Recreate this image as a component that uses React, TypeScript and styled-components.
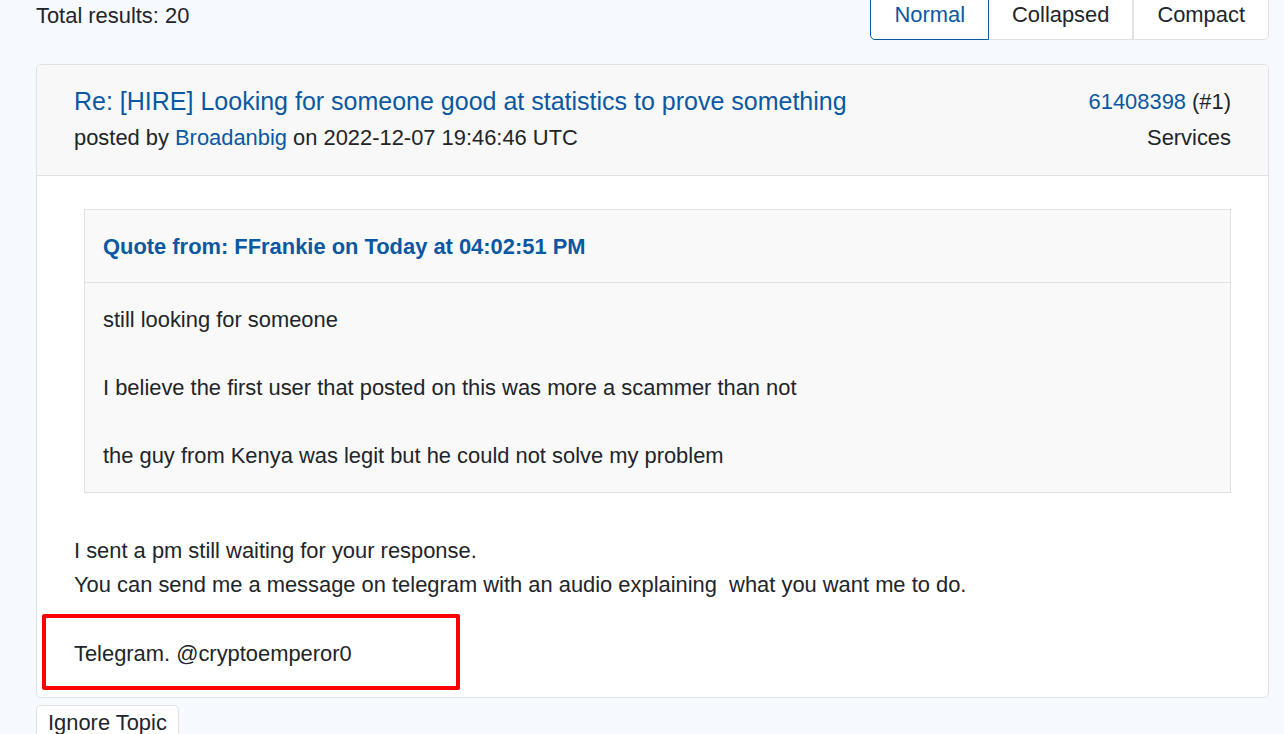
import React from 'react';
import styled, { createGlobalStyle } from 'styled-components';

const GlobalStyle = createGlobalStyle`
  html, body {
    margin: 0;
    padding: 0;
    background: #f6f9fe;
    font-family: "Liberation Sans", Arial, sans-serif;
    font-size: 21.9px;
    line-height: 34px;
    color: #212529;
    overflow: hidden;
  }
  * { box-sizing: border-box; }
`;

const views = ['Normal', 'Collapsed', 'Compact'];

const App = () => {
  return (
    <>
      <GlobalStyle />
      <Page>
        <TopBar>
          <Total>Total results: 20</Total>
          <Tabs>
            {views.map((v, i) => (
              <Tab key={v} $active={i === 0}>{v}</Tab>
            ))}
          </Tabs>
        </TopBar>

        <Card>
          <CardHeader>
            <div>
              <Title href="#">Re: [HIRE] Looking for someone good at statistics to prove something</Title>
              <Meta>posted by <Link href="#">Broadanbig</Link> on 2022-12-07 19:46:46 UTC</Meta>
            </div>
            <Side>
              <div><Link href="#">61408398</Link> (#1)</div>
              <div>Services</div>
            </Side>
          </CardHeader>

          <CardBody>
            <Quote>
              <QuoteHead>Quote from: FFrankie on Today at 04:02:51 PM</QuoteHead>
              <QuoteText>
                still looking for someone<br /><br />
                I believe the first user that posted on this was more a scammer than not<br /><br />
                the guy from Kenya was legit but he could not solve my problem
              </QuoteText>
            </Quote>
            <Text>
              I sent a pm still waiting for your response.<br />
              You can send me a message on telegram with an audio explaining&nbsp; what you want me to do.
            </Text>
            <Highlight>Telegram. @cryptoemperor0</Highlight>
          </CardBody>
        </Card>

        <IgnoreButton>Ignore Topic</IgnoreButton>
      </Page>
    </>
  );
};

const Page = styled.div`
  margin-top: -11px;
  padding: 0 15px 0 36px;
`;

const TopBar = styled.div`
  display: flex;
  justify-content: space-between;
  align-items: center;
  margin-bottom: 24px;
`;

const Total = styled.div`
  padding-top: 2px;
`;

const Tabs = styled.div`
  display: flex;
`;

const Tab = styled.button<{ $active?: boolean }>`
  font: inherit;
  line-height: 34px;
  padding: 8px 23px 7px;
  background: #fff;
  color: ${p => (p.$active ? '#0a58a2' : '#212529')};
  border: 1px solid ${p => (p.$active ? '#0a58a2' : '#dee2e6')};
  margin-left: -1px;
  position: relative;
  z-index: ${p => (p.$active ? 1 : 0)};
  &:first-child { border-radius: 0 0 0 5px; margin-left: 0; }
  &:last-child { border-radius: 0 0 5px 0; border-left: 2px solid #dee2e6; }
`;

const Card = styled.div`
  border: 1px solid #dee2e6;
  border-radius: 5px;
  background: #fff;
  overflow: hidden;
`;

const CardHeader = styled.div`
  display: flex;
  justify-content: space-between;
  background: #f8f8f8;
  border-bottom: 1px solid #dee2e6;
  padding: 19px 37px 19px;
`;

const Title = styled.a`
  display: block;
  font-size: 25px;
  line-height: 35px;
  margin-bottom: 2px;
  color: #0a58a2;
  text-decoration: none;
`;

const Meta = styled.div`
  margin-bottom: 1px;
`;

const Link = styled.a`
  color: #0a58a2;
  text-decoration: none;
`;

const Side = styled.div`
  text-align: right;
  line-height: 36px;
`;

const CardBody = styled.div`
  padding: 33px 37px 7px;
`;

const Quote = styled.div`
  margin: 0 0 41px 10px;
  border: 1px solid #dee2e6;
  background: #f9f9f9;
`;

const QuoteHead = styled.div`
  font-weight: bold;
  color: #0a58a2;
  padding: 20px 18px 18px;
  border-bottom: 1px solid #dee2e6;
`;

const QuoteText = styled.div`
  padding: 20px 18px 19px;
`;

const Text = styled.div``;

const Highlight = styled.div`
  margin: 12px 0 0 -32px;
  width: 418px;
  border: 4px solid #ff0000;
  border-radius: 2px;
  padding: 19px 0 15px 28px;
`;

const IgnoreButton = styled.button`
  margin-top: 7px;
  font: inherit;
  line-height: 34px;
  padding: 0 11px;
  background: #fff;
  color: #212529;
  border: 1px solid #dee2e6;
  border-radius: 5px;
`;

export default App;
